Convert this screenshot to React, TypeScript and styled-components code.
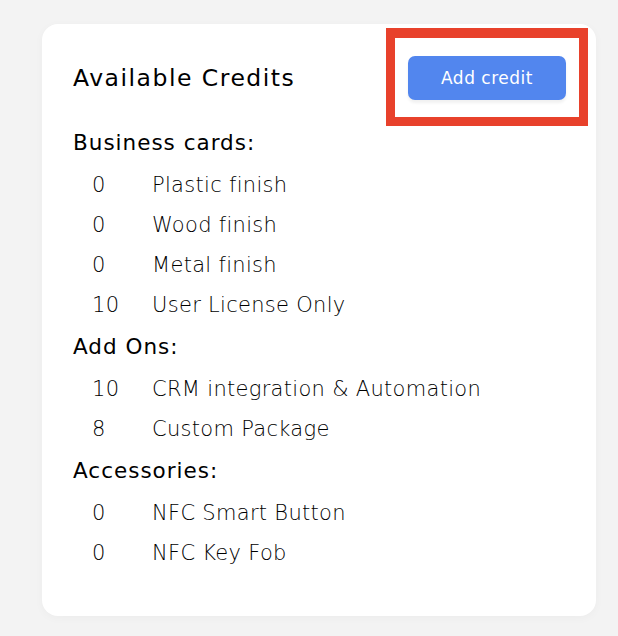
import React from "react";
import styled, { createGlobalStyle } from "styled-components";

// DATA //
type Credit = { count: number; label: string };
type Section = { title: string; items: Credit[] };

const sections: Section[] = [
    {
        title: "Business cards:",
        items: [
            { count: 0, label: "Plastic finish" },
            { count: 0, label: "Wood finish" },
            { count: 0, label: "Metal finish" },
            { count: 10, label: "User License Only" },
        ],
    },
    {
        title: "Add Ons:",
        items: [
            { count: 10, label: "CRM integration & Automation" },
            { count: 8, label: "Custom Package" },
        ],
    },
    {
        title: "Accessories:",
        items: [
            { count: 0, label: "NFC Smart Button" },
            { count: 0, label: "NFC Key Fob" },
        ],
    },
];

const App = () => {
    return (
        <>
            <GlobalStyle />
            <Page>
                <Card>
                    <Header>
                        <Title>Available Credits</Title>
                        <Highlight>
                            <AddButton>Add credit</AddButton>
                        </Highlight>
                    </Header>
                    <Sections>
                        {sections.map((section) => (
                            <SectionBlock key={section.title}>
                                <SectionTitle>{section.title}</SectionTitle>
                                {section.items.map((item) => (
                                    <Row key={item.label}>
                                        <Count>{item.count}</Count>
                                        <Label>{item.label}</Label>
                                    </Row>
                                ))}
                            </SectionBlock>
                        ))}
                    </Sections>
                </Card>
            </Page>
        </>
    );
};

// STYLED COMPONENTS //
const GlobalStyle = createGlobalStyle`
    html, body {
        margin: 0;
        padding: 0;
        background: #f3f3f3;
    }
    body {
        font-family: "DejaVu Sans", "Noto Sans", sans-serif;
        color: #111111;
    }
`;

const Page = styled.div`
    width: 618px;
    height: 636px;
    padding: 24px 22px 0 42px;
    box-sizing: border-box;
`;

const Card = styled.div`
    width: 554px;
    height: 592px;
    box-sizing: border-box;
    background: #ffffff;
    border-radius: 16px;
    box-shadow: 0 2px 10px rgba(0, 0, 0, 0.03);
    padding: 32px 30px 0 31px;
`;

const Header = styled.div`
    display: flex;
    justify-content: space-between;
    align-items: center;
    height: 44px;
`;

const Title = styled.h2`
    margin: 0;
    font-size: 23.5px;
    font-weight: 400;
    letter-spacing: 1.5px;
    color: #000000;
`;

const Highlight = styled.div`
    position: relative;
    &::after {
        content: "";
        position: absolute;
        left: -22px;
        right: -22px;
        top: -28px;
        bottom: -26px;
        border: 9px solid #e8412b;
        border-top-width: 10px;
        pointer-events: none;
    }
`;

const AddButton = styled.button`
    width: 158px;
    height: 44px;
    border: none;
    border-radius: 7px;
    background: #5286ee;
    color: #ffffff;
    font-family: "DejaVu Sans", "Noto Sans", sans-serif;
    font-size: 17px;
    font-weight: 400;
    letter-spacing: 0.5px;
    box-shadow: 0 3px 3px rgba(0, 0, 0, 0.06);
    cursor: pointer;
`;

const Sections = styled.div`
    margin-top: 23px;
    display: flex;
    flex-direction: column;
    gap: 3px;
`;

const SectionBlock = styled.div`
    display: flex;
    flex-direction: column;
`;

const SectionTitle = styled.div`
    height: 41px;
    line-height: 40px;
    font-size: 21.5px;
    font-weight: 400;
    letter-spacing: 1px;
    color: #000000;
`;

const Row = styled.div`
    display: grid;
    grid-template-columns: 60px 1fr;
    height: 40px;
    box-sizing: border-box;
    padding: 2px 0 0 19px;
    align-items: center;
    font-size: 21px;
    font-weight: 300;
    letter-spacing: 0.3px;
    color: #000000;
`;

const Count = styled.span``;

const Label = styled.span``;

export default App;
